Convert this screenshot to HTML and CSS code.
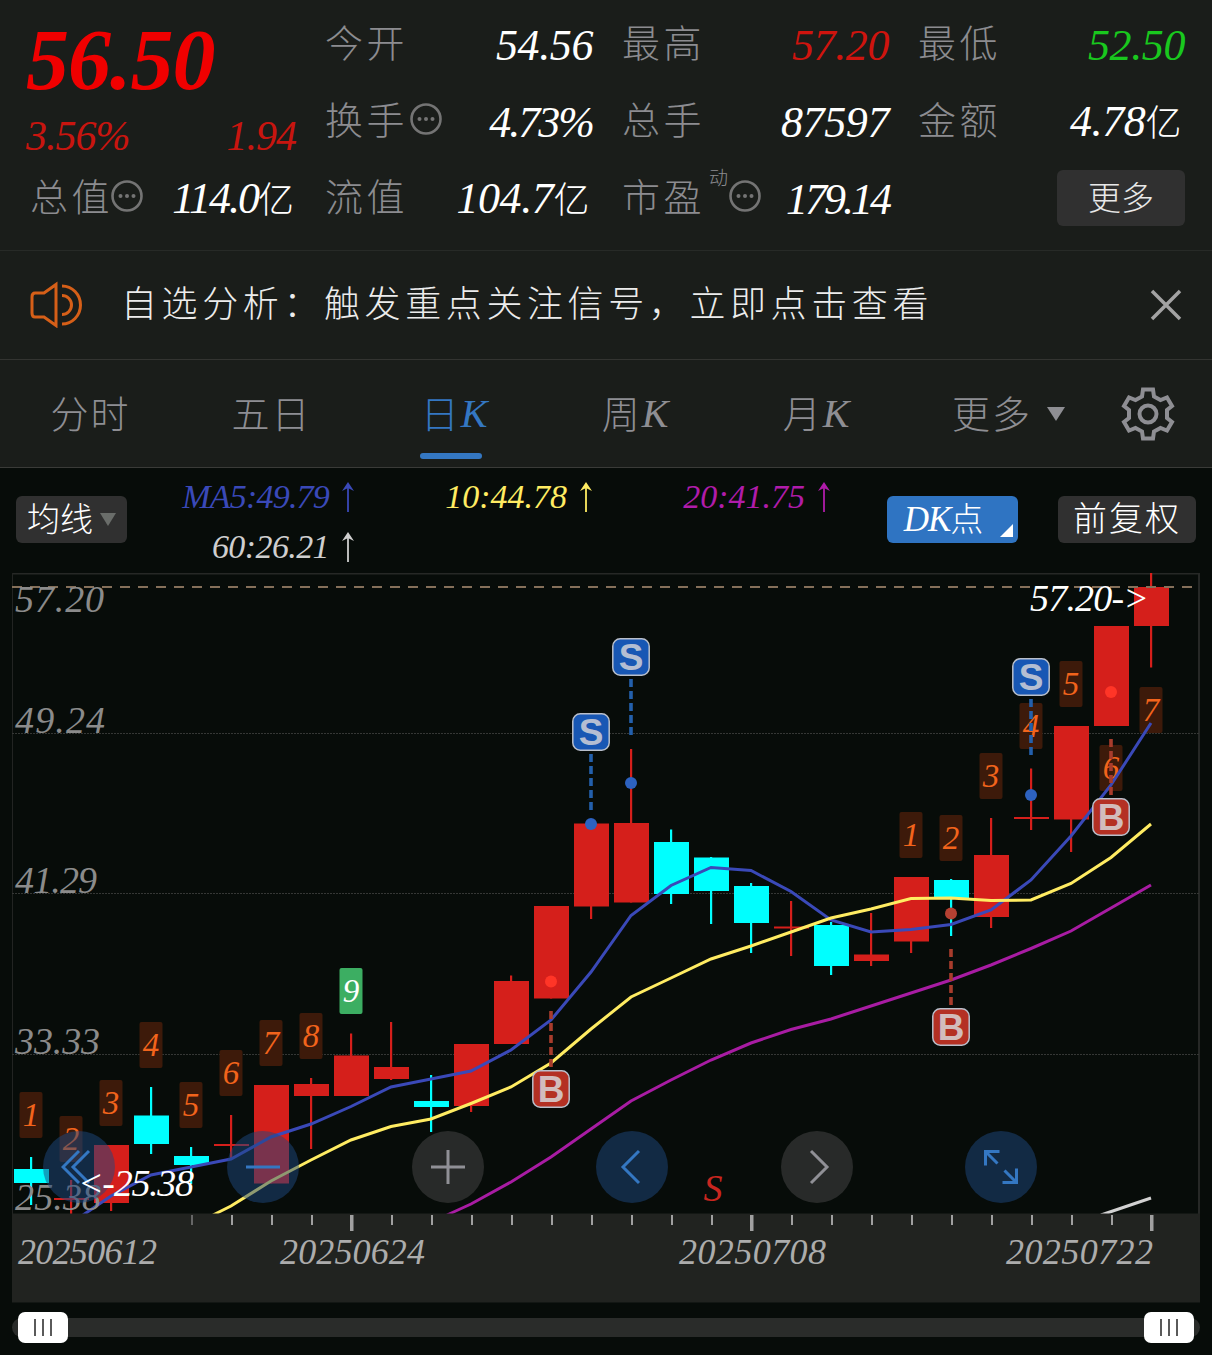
FILE: index.html
```html
<!DOCTYPE html>
<html lang="zh-CN">
<head>
    <meta charset="UTF-8">
    <meta name="viewport" content="width=device-width, initial-scale=1.0">
    <title>日K</title>
    <link rel="stylesheet" href="styles.css">
</head>
<body>

    <svg class="defs" width="0" height="0">
        <symbol id="info" viewBox="0 0 34 34">
            <circle cx="17" cy="17" r="14.5" fill="none" stroke="#747474" stroke-width="2.6"/>
            <circle cx="10.5" cy="17" r="2" fill="#747474"/>
            <circle cx="17" cy="17" r="2" fill="#747474"/>
            <circle cx="23.5" cy="17" r="2" fill="#747474"/>
        </symbol>
        <symbol id="up" viewBox="0 0 16 32">
            <path d="M8 31V4" fill="none" stroke="currentColor" stroke-width="1.8"/>
            <path d="M8 1l6 9-6-3-6 3z" fill="currentColor"/>
        </symbol>
    </svg>

    <section class="quote">
        <div class="price-box">
            <div class="price">56.50</div>
            <div class="change"><span>3.56%</span><span>1.94</span></div>
        </div>
        <div class="cell"><span class="label">今开</span><span class="num">54.56</span></div>
        <div class="cell"><span class="label">最高</span><span class="num red">57.20</span></div>
        <div class="cell"><span class="label">最低</span><span class="num green">52.50</span></div>

        <div class="cell"><span class="label">换手</span><svg class="info"><use href="#info"/></svg><span class="num tight">4.73%</span></div>
        <div class="cell"><span class="label">总手</span><span class="num">87597</span></div>
        <div class="cell"><span class="label">金额</span><span class="num">4.78<i class="unit">亿</i></span></div>

        <div class="cell first"><span class="label">总值</span><svg class="info"><use href="#info"/></svg><span class="num tight">114.0<i class="unit">亿</i></span></div>
        <div class="cell"><span class="label">流值</span><span class="num">104.7<i class="unit">亿</i></span></div>
        <div class="cell"><span class="label">市盈</span><span class="sup">动</span><svg class="info"><use href="#info"/></svg><span class="num tighter">179.14</span></div>
        <div class="cell"><button class="more">更多</button></div>
    </section>

    <section class="notice">
        <svg class="speaker" viewBox="0 0 56 48" fill="none" stroke="#d65f18" stroke-width="3">
            <path d="M27 4.5v41l-12-8.5H6q-3 0-3-4V17q0-4 3-4h9z"/>
            <path d="M33 6a18.5 19 0 0 1 0 38M33 15.5a9.5 9.5 0 0 1 0 19"/>
        </svg>
        <span class="notice-text">自选分析：触发重点关注信号，立即点击查看</span>
        <svg class="close" viewBox="0 0 32 32"><path d="M2 2l28 28M30 2L2 30" stroke="#a3a3a3" stroke-width="3.5"/></svg>
    </section>

    <nav class="tabs">
        <a class="tab">分时</a>
        <a class="tab">五日</a>
        <a class="tab active">日<i>K</i></a>
        <a class="tab">周<i>K</i></a>
        <a class="tab">月<i>K</i></a>
        <a class="tab last">更多<svg width="18" height="14"><path d="M0 0h18l-9 14z" fill="#8e8e93"/></svg></a>
        <svg class="gear" viewBox="-28 -28 56 56" fill="none" stroke="#8e8e93" stroke-width="4">
            <path d="M-5-24.5H5l1 7 6.5 3.5 6.5-2.500 5 8.500-5 4v8l5 4-5 8.500-6.500-2.500L6 17.500l-1 7H-5l-1-7-6.500-3.500-6.500 2.500-5-8.500 5-4v-8l-5-4 5-8.500 6.500 2.500 6.500-3.500z"/>
            <circle r="8.5"/>
        </svg>
    </nav>

    <section class="toolbar">
        <button class="btn ma-btn">均线<svg width="16" height="13"><path d="M0 0h16l-8 13z" fill="#6a6d6a"/></svg></button>
        <div class="ma-list">
            <span class="ma ma5">MA5:49.79<svg><use href="#up"/></svg></span>
            <span class="ma ma10">10:44.78<svg><use href="#up"/></svg></span>
            <span class="ma ma20">20:41.75<svg><use href="#up"/></svg></span>
            <span class="ma ma60">60:26.21<svg><use href="#up"/></svg></span>
        </div>
        <button class="btn dk"><i>DK</i>点</button>
        <button class="btn fq">前复权</button>
    </section>

    <section class="chart">
        <svg id="kline" width="1212" height="730" viewBox="0 573 1212 730"></svg>
        <div class="controls">
            <button class="round blue"><svg viewBox="-18 -18 36 36"><path d="M0-16l-16 16 16 16M10-16L-6 0l16 16"/></svg></button>
            <button class="round blue"><svg viewBox="-18 -18 36 36"><path d="M-17 0h34"/></svg></button>
            <button class="round"><svg viewBox="-18 -18 36 36"><path d="M-17 0h34M0-17v34"/></svg></button>
            <button class="round blue"><svg viewBox="-18 -18 36 36"><path d="M7-16L-9 0 7 16"/></svg></button>
            <button class="round"><svg viewBox="-18 -18 36 36"><path d="M-6-16L10 0-6 16"/></svg></button>
            <button class="round blue"><svg viewBox="-18 -18 36 36"><path d="M-1.5-15.5h-14v14M-15.500-15.500L-3.500-3.500M1.500 15.500h14v-14M15.500 15.500L3.500 3.500"/></svg></button>
        </div>
        <svg class="low" viewBox="0 0 136 50"><text x="3" y="34" textLength="116">&lt;-25.38</text></svg>
    </section>

    <div class="slider">
        <div class="track">
            <span class="handle"><b></b><b></b><b></b></span>
            <span class="handle"><b></b><b></b><b></b></span>
        </div>
    </div>

    <script>
        const RED = '#d51f1b';
        const CYAN = '#00ffff';
        const X0 = 31;
        const STEP = 40;

        // [color, high, body top, body bottom, low]
        const candles = [
            [CYAN, 1157, 1169, 1183, 1205],
            [RED, 1180, 1198, 1200, 1214],
            [RED, 1145, 1145, 1203, 1211],
            [CYAN, 1087, 1115.5, 1144, 1154],
            [CYAN, 1147, 1156, 1165, 1184],
            [RED, 1115, 1144, 1146, 1159],
            [RED, 1085, 1085, 1183.5, 1183.5],
            [RED, 1078, 1084, 1096, 1149],
            [RED, 1033.5, 1055.5, 1096, 1096],
            [RED, 1022, 1067, 1079, 1080],
            [CYAN, 1075, 1101, 1107, 1132],
            [RED, 1044, 1044, 1106, 1112],
            [RED, 975.5, 981, 1044, 1044],
            [RED, 906, 906, 998.5, 998.5],
            [RED, 823.5, 823.5, 906.5, 919],
            [RED, 749, 823, 902.5, 902.5],
            [CYAN, 829.5, 842, 894, 904],
            [CYAN, 857, 857.5, 891, 924],
            [CYAN, 883, 886, 923, 953],
            [RED, 901, 926.5, 928.5, 956],
            [CYAN, 922, 925, 966, 975],
            [RED, 913, 954.5, 961, 966],
            [RED, 877, 877, 941.5, 953],
            [CYAN, 879, 880, 898, 936],
            [RED, 818, 855, 917, 928],
            [RED, 768.5, 817, 819, 830],
            [RED, 726, 726, 819.5, 852],
            [RED, 626, 626, 726, 726],
            [RED, 573, 587, 626, 667.5]
        ];

        // [candle index, top, text]
        const tags = [
            [0, 1092, 1], [1, 1116, 2], [2, 1080, 3], [3, 1022, 4], [4, 1082, 5], [5, 1050, 6],
            [6, 1020, 7], [7, 1013, 8], [8, 968, 9], [22, 812, 1], [23, 815, 2], [24, 753, 3],
            [25, 703, 4], [26, 661, 5], [27, 745, 6], [28, 687, 7]
        ];

        // [type, candle index, box top, dash start, dot y]
        const signals = [
            ['S', 14, 713, 754, 824], ['S', 15, 638, 679, 783], ['S', 25, 658, 699, 795],
            ['B', 13, 1070, 1011, 981.5], ['B', 23, 1008, 949, 913.5], ['B', 27, 798, 739, 692]
        ];

        const lines = {
            '#a81ca3': '447,1215 471,1204 511,1182 551,1157 591,1129 631,1101 671,1080 711,1060 751,1043 791,1029.5 831,1019 871,1006 911,993 951,980 991,965 1031,948.5 1071,931 1111,908 1151,885',
            '#3a49b8': '83,1215 111,1196 151,1175 191,1167 231,1159 271,1137 311,1124 351,1106.5 391,1087 431,1079 471,1071 511,1050 551,1020 591,972 631,915.5 671,885.5 711,867.5 751,870.5 791,891.5 831,920 871,932 911,929.5 951,924.5 991,910 1031,880 1071,836 1111,785 1151,723',
            '#ffec62': '213,1215 231,1206 271,1181 311,1160 351,1140 391,1126.5 431,1119 471,1103.5 511,1087 551,1063 591,1029 631,997 671,978 711,959 751,946 791,932 831,918 871,909 911,898.5 951,898 991,900.5 1031,900 1071,883.5 1111,857.5 1151,824',
            '#d2d2d2': '1101,1215 1151,1198'
        };

        let s = '';

        // frame and grid
        s += '<path d="M12 573.5H1199V1214" fill="none" stroke="#262826" stroke-width="2"/>';
        s += '<path d="M12.5 573V1214" stroke="#222422"/>';
        [733.5, 893.5, 1054.5].forEach(y => {
            s += `<path d="M12 ${y}H1199" stroke="#353735" stroke-dasharray="2 1"/>`;
        });

        // number tags
        tags.forEach(([i, y, n]) => {
            const x = X0 + i * STEP;
            const nine = n === 9;
            s += `<rect x="${x - 11.5}" y="${y}" width="23" height="46" rx="2" fill="${nine ? '#3cae62' : '#3d1a0a'}"/>`;
            s += `<text class="tag" x="${x}" y="${y + 34}" fill="${nine ? '#fff' : '#f2641c'}">${n}</text>`;
        });

        candles.forEach(([c, hi, top, bot, lo], i) => {
            const x = X0 + i * STEP;
            s += `<rect x="${x - 1}" y="${hi}" width="2.2" height="${lo - hi}" fill="${c}"/>`;
            s += `<rect x="${x - 17}" y="${top}" width="35" height="${bot - top}" fill="${c}"/>`;
        });

        for (const color in lines) {
            s += `<polyline points="${lines[color]}" fill="none" stroke="${color}" stroke-width="3"/>`;
        }
        s += '<path d="M12 587H1193" stroke="#85705a" stroke-width="1.8" stroke-dasharray="10 8"/>';

        signals.forEach(([t, i, y, dash, dot]) => {
            const x = X0 + i * STEP;
            const sell = t === 'S';
            s += `<path d="M${x} ${dash}v56" stroke="${sell ? '#2360ac' : '#a83c2c'}" stroke-width="3.6" stroke-dasharray="8 4"/>`;
            s += `<circle cx="${x}" cy="${dot}" r="6" fill="${sell ? '#2d62c0' : i === 23 ? '#b54132' : '#ff3527'}"/>`;
            s += `<rect x="${x - 18.2}" y="${y + 0.8}" width="36.4" height="36.4" rx="7.5" fill="${sell ? '#1857b4' : '#b43023'}" stroke="#b9bfcb" stroke-width="1.5"/>`;
            s += `<text class="signal" x="${x}" y="${y + 32}" fill="${sell ? '#b4bed2' : '#d2bcbc'}">${t}</text>`;
        });

        s += '<text class="mark" x="713" y="1201">S</text>';

        // time axis
        s += '<rect x="12" y="1213.5" width="1188" height="89" fill="#212320"/>';
        for (let x = 192; x <= 1152; x += 40) {
            const major = (x - 352) % 400 === 0;
            s += `<rect x="${x - (major ? 2 : 1)}" y="1215" width="${major ? 3.5 : 2}" height="${major ? 16 : 10}" fill="${x === 192 ? '#666' : '#a0a0a0'}"/>`;
        }
        [['20250612', 18, 139], ['20250624', 280, 145], ['20250708', 679, 147], ['20250722', 1006, 147]].forEach(([d, x, w]) => {
            s += `<text class="date" x="${x}" y="1264" textLength="${w}">${d}</text>`;
        });

        // price labels
        [['57.20', 612, 89], ['49.24', 733, 90], ['41.29', 893, 82], ['33.33', 1054, 85], ['25.38', 1210, 86]].forEach(([p, y, w]) => {
            s += `<text class="scale" x="15" y="${y}" textLength="${w}">${p}</text>`;
        });
        s += '<text class="high" x="1030" y="611" textLength="119">57.20-&gt;</text>';

        document.getElementById('kline').innerHTML = s;
    </script>
</body>
</html>
```
FILE: styles.css
```css
body {
    margin: 0;
    width: 1212px;
    height: 1355px;
    overflow: hidden;
    background-color: #070c09;
    color: #fff;
    font-family: "Liberation Serif", "Noto Sans CJK SC", serif;
    font-weight: 300;
}

.defs {
    position: absolute;
}

button {
    border: none;
    padding: 0;
    margin: 0;
    color: #fff;
    font-family: inherit;
    font-weight: 300;
}

.quote {
    display: grid;
    grid-template-columns: 270px 268px 267px 267px;
    grid-template-rows: repeat(3, 77px);
    column-gap: 29px;
    height: 250px;
    padding: 5px 26px 0;
    box-sizing: border-box;
    background-color: #1a1d1a;
}

.price-box {
    grid-row: span 2;
}

.price {
    height: 110px;
    line-height: 110px;
    font-size: 86px;
    font-weight: bold;
    font-style: italic;
    letter-spacing: -1px;
    color: #f00000;
}

.change {
    display: flex;
    justify-content: space-between;
    line-height: 43px;
    font-size: 42px;
    font-style: italic;
    letter-spacing: -1px;
    color: #c8150f;
}

.cell {
    display: flex;
    align-items: center;
    white-space: nowrap;
}

.label {
    font-size: 38px;
    letter-spacing: 3.5px;
    line-height: 60px;
    color: #8c8c90;
}

.first .label {
    margin-left: 4px;
}

.info {
    width: 34px;
    height: 34px;
    margin: -3px 0 0 1px;
}

.first .info {
    margin-left: -3px;
}

.sup {
    font-size: 19px;
    line-height: 20px;
    margin: -38px -1px 0 4px;
    color: #8c8c90;
}

.num {
    margin-left: auto;
    padding-top: 4px;
    font-size: 44px;
    font-style: italic;
    letter-spacing: -0.4px;
    line-height: 60px;
}

.tight {
    letter-spacing: -2px;
}

.tighter {
    letter-spacing: -3px;
}

.unit {
    font-size: 36px;
    font-style: normal;
    margin-right: 4px;
}

.red {
    color: #cf140e;
}

.green {
    color: #19c81e;
}

.more {
    width: 128px;
    height: 56px;
    margin-left: auto;
    padding-bottom: 4px;
    border-radius: 6px;
    background-color: #303030;
    font-size: 33px;
    color: #e8e8e8;
}

.notice {
    display: flex;
    align-items: center;
    height: 110px;
    padding: 0 30px 0 29px;
    box-sizing: border-box;
    border-top: 1px solid #272a27;
    border-bottom: 1px solid #333431;
    background-color: #1a1d1a;
}

.speaker {
    width: 56px;
    height: 48px;
    margin-top: -2px;
}

.notice-text {
    margin-left: 36px;
    font-size: 36px;
    letter-spacing: 4.6px;
    line-height: 50px;
    color: #ececec;
}

.close {
    width: 32px;
    height: 32px;
    margin-left: auto;
}

.tabs {
    display: flex;
    align-items: center;
    height: 108px;
    box-sizing: border-box;
    border-bottom: 1px solid #3a3b38;
    background-color: #1a1d1a;
}

.tab {
    display: flex;
    position: relative;
    justify-content: center;
    align-items: center;
    width: 181px;
    height: 107px;
    padding-bottom: 5px;
    box-sizing: border-box;
    font-size: 38px;
    letter-spacing: 2px;
    color: #8e8e93;
}

.tab i {
    margin: 5px -5px 0 0;
    font-size: 40px;
}

.active {
    color: #3477c2;
}

.active::after {
    content: "";
    position: absolute;
    left: 58px;
    bottom: 8px;
    width: 62px;
    height: 6px;
    border-radius: 3px;
    background-color: #3477c2;
}

.last {
    width: 207px;
}

.last svg {
    margin: 5px 0 0 15px;
}

.gear {
    width: 56px;
    height: 56px;
    margin-left: 8px;
}

.toolbar {
    display: flex;
    height: 105px;
    padding: 0 16px;
    box-sizing: border-box;
}

.btn {
    display: flex;
    justify-content: center;
    align-items: center;
    height: 47px;
    margin-top: 28px;
    border-radius: 6px;
    background-color: #303030;
    font-size: 33px;
    line-height: 40px;
}

.ma-btn {
    width: 111px;
    gap: 7px;
}

.ma-list {
    display: grid;
    grid-template-columns: 229px 238px 238px;
    grid-template-rows: 50px 50px;
    width: 760px;
    padding-top: 4px;
    box-sizing: border-box;
}

.ma {
    display: flex;
    justify-content: flex-end;
    align-items: center;
    gap: 11px;
    font-size: 34px;
    font-style: italic;
}

.ma svg {
    width: 16px;
    height: 32px;
}

.ma5 {
    color: #3a49b8;
    letter-spacing: -0.8px;
}

.ma10 {
    color: #ffec62;
}

.ma20 {
    color: #b01caa;
}

.ma60 {
    color: #cfcfcf;
    letter-spacing: -0.6px;
}

.dk {
    position: relative;
    width: 131px;
    background-color: #2f74c2;
    padding-right: 18px;
    box-sizing: border-box;
}

.dk i {
    font-size: 35px;
    letter-spacing: -1px;
}

.dk::after {
    content: "";
    position: absolute;
    right: 5px;
    bottom: 6px;
    border-left: 13px solid transparent;
    border-bottom: 13px solid #fff;
}

.fq {
    width: 138px;
    margin-left: auto;
    letter-spacing: 2px;
    font-size: 34px;
}

.chart {
    position: relative;
    height: 730px;
}

#kline {
    display: block;
}

.controls {
    position: absolute;
    left: 43px;
    top: 558px;
    display: flex;
    gap: 112.4px;
}

.round {
    display: flex;
    justify-content: center;
    align-items: center;
    width: 72px;
    height: 72px;
    border-radius: 50%;
    background-color: rgba(64, 64, 64, 0.6);
}

.round svg {
    width: 36px;
    height: 36px;
    fill: none;
    stroke: #909096;
    stroke-width: 3;
}

.blue {
    background-color: rgba(30, 72, 128, 0.5);
}

.blue svg {
    stroke: #3477c2;
}

.low {
    position: absolute;
    left: 75px;
    top: 589px;
    width: 136px;
    height: 50px;
}

text {
    font-style: italic;
}

.tag {
    font-size: 33px;
    text-anchor: middle;
}

.signal {
    font-family: "Liberation Sans", sans-serif;
    font-size: 37px;
    font-style: normal;
    font-weight: bold;
    text-anchor: middle;
}

.mark {
    font-size: 38px;
    text-anchor: middle;
    fill: #c8261f;
}

.date {
    font-size: 36px;
    fill: #acacac;
}

.scale {
    font-size: 38px;
    fill: #8b8b8b;
}

.high,
.low text {
    font-size: 38px;
    fill: #fff;
}

.slider {
    display: flex;
    height: 52px;
    padding: 0 12px;
    align-items: center;
    box-sizing: border-box;
}

.track {
    display: flex;
    justify-content: space-between;
    align-items: center;
    width: 100%;
    height: 19px;
    margin-top: -3px;
    padding: 0 6px;
    box-sizing: border-box;
    border-radius: 10px;
    background-color: #2a2c2a;
}

.handle {
    display: flex;
    justify-content: center;
    align-items: center;
    gap: 6px;
    width: 50px;
    height: 31px;
    border-radius: 7px;
    background-color: #fff;
}

.handle b {
    width: 2px;
    height: 17px;
    background-color: #5a5a5a;
}
```
